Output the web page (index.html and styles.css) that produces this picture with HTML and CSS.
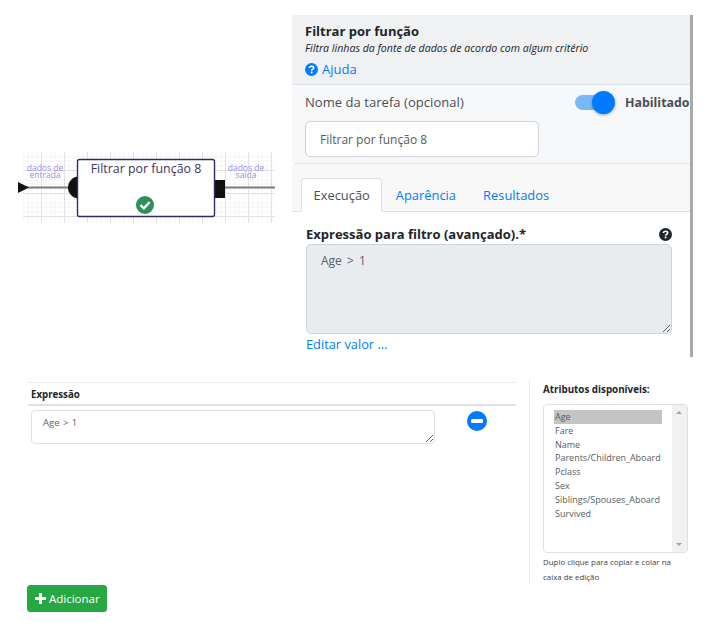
FILE: index.html
```html
<!DOCTYPE html>
<html lang="pt-BR">
<head>
    <meta charset="UTF-8">
    <title>Filtrar por função</title>
    <link rel="stylesheet" href="styles.css">
</head>
<body>
    <div class="top-row">
        <svg class="diagram" width="257" height="71" viewBox="0 0 257 71">
            <defs>
                <pattern id="grid" width="23" height="23" patternUnits="userSpaceOnUse">
                    <path d="M5 0V23M10 0V23M14 0V23M19 0V23" stroke="#f5f5f7" fill="none"/>
                    <path d="M0 5H23M0 9H23M0 14H23" stroke="#f5f5f7" fill="none"/>
                    <path d="M0.5 0V23M0 18.5H23" stroke="#e2e2e6" fill="none"/>
                </pattern>
            </defs>
            <rect x="5" y="0" width="252" height="71" fill="url(#grid)"/>
            <path d="M0 35.5H60M200 35.5H257" stroke="#7c7c7c" stroke-width="2"/>
            <path d="M0 30L11 35.5L0 41Z" fill="#111"/>
            <circle cx="61" cy="35.5" r="11" fill="#111"/>
            <rect x="196" y="28" width="11" height="18" fill="#111"/>
            <rect x="59.5" y="7.5" width="137" height="57" rx="2" fill="#fff" stroke="#2b2f66" stroke-width="1.4"/>
            <text class="port"><tspan x="27" y="18.5">dados de</tspan><tspan x="27" y="26">entrada</tspan></text>
            <text class="port"><tspan x="228" y="18.5">dados de</tspan><tspan x="228" y="26">saída</tspan></text>
            <text class="node-title" x="128" y="21">Filtrar por função 8</text>
            <circle cx="127" cy="53" r="9" fill="#2f8f5b"/>
            <path d="M122.5 53.2L125.8 56.3L131.6 50.2" fill="none" stroke="#fff" stroke-width="2.4"/>
        </svg>

        <div class="panel">
            <div class="panel-head">
                <div class="panel-title">Filtrar por função</div>
                <div class="panel-desc">Filtra linhas da fonte de dados de acordo com algum critério</div>
                <a class="help-link" href="#">
                    <svg class="help-icon" viewBox="0 0 16 16"><circle cx="8" cy="8" r="8" fill="#007bff"/><path d="M5.4 6.2C5.5 4.7 6.6 3.9 8.1 3.9C9.6 3.9 10.7 4.8 10.7 6C10.7 7.7 8.1 7.7 8.1 9.4" fill="none" stroke="#fff" stroke-width="1.9"/><rect x="7" y="10.6" width="2.2" height="2.1" fill="#fff"/></svg>
                    Ajuda
                </a>
            </div>
            <div class="task-box">
                <div class="task-row">
                    <span class="task-label">Nome da tarefa (opcional)</span>
                    <span class="toggle"><span class="toggle-thumb"></span></span>
                    <span class="toggle-label">Habilitado</span>
                </div>
                <input class="task-input" type="text" value="Filtrar por função 8">
            </div>
            <div class="card">
                <div class="tabs">
                    <a class="tab active" href="#">Execução</a>
                    <a class="tab" href="#">Aparência</a>
                    <a class="tab" href="#">Resultados</a>
                </div>
                <div class="card-body">
                    <div class="field-head">
                        <span class="field-label">Expressão para filtro (avançado).*</span>
                        <svg class="field-help" viewBox="0 0 16 16"><circle cx="8" cy="8" r="8" fill="#212529"/><path d="M5.4 6.2C5.5 4.7 6.6 3.9 8.1 3.9C9.6 3.9 10.7 4.8 10.7 6C10.7 7.7 8.1 7.7 8.1 9.4" fill="none" stroke="#fff" stroke-width="1.9"/><rect x="7" y="10.6" width="2.2" height="2.1" fill="#fff"/></svg>
                    </div>
                    <textarea class="expr-area" readonly>Age &gt; 1</textarea>
                    <a class="edit-link" href="#">Editar valor ...</a>
                </div>
            </div>
        </div>
    </div>

    <div class="bottom-row">
        <div class="expr-col">
            <div class="expr-head">Expressão</div>
            <div class="expr-row">
                <textarea class="expr-small" readonly>Age &gt; 1</textarea>
                <svg class="remove-icon" viewBox="0 0 20 20"><circle cx="10" cy="10" r="10" fill="#007bff"/><rect x="4" y="8" width="12" height="4" rx="1" fill="#fff"/></svg>
            </div>
        </div>
        <div class="attr-col">
            <div class="attr-title">Atributos disponíveis:</div>
            <div class="attr-box">
                <div class="attr-list">
                    <div class="attr-item selected">Age</div>
                    <div class="attr-item">Fare</div>
                    <div class="attr-item">Name</div>
                    <div class="attr-item">Parents/Children_Aboard</div>
                    <div class="attr-item">Pclass</div>
                    <div class="attr-item">Sex</div>
                    <div class="attr-item">Siblings/Spouses_Aboard</div>
                    <div class="attr-item">Survived</div>
                </div>
                <div class="attr-scroll">
                    <span class="arrow-up"></span>
                    <span class="arrow-down"></span>
                </div>
            </div>
            <div class="attr-hint">Duplo clique para copiar e colar na caixa de edição</div>
        </div>
    </div>

    <button class="add-btn"><span class="add-plus"></span>Adicionar</button>
</body>
</html>
```

FILE: styles.css
```css
* {
    box-sizing: border-box;
}
html, body {
    height: 623px;
    overflow: hidden;
}
body {
    margin: 0;
    background: #fff;
    color: #212529;
    font-family: "Open Sans", Arial, sans-serif;
}
a {
    color: #007bff;
    text-decoration: none;
}

/* top part */
.top-row {
    display: flex;
    align-items: flex-start;
    height: 380px;
    padding: 15px 0 0 18px;
}
.diagram {
    display: block;
    flex: none;
    margin-top: 137px;
}
.port {
    font-size: 8.5px;
    fill: #9a8fe6;
    text-anchor: middle;
}
.node-title {
    font-size: 12.4px;
    fill: #3a3560;
    text-anchor: middle;
}
.panel {
    flex: none;
    width: 401px;
    height: 342px;
    margin-left: 17px;
    border-right: 3px solid #a9a9a9;
    overflow: hidden;
}
.panel-head {
    height: 70px;
    padding: 8px 13px 0;
    background: #f0f1f3;
    border-bottom: 1px solid #dee2e6;
}
.panel-title {
    font-size: 13px;
    font-weight: 700;
    line-height: 17px;
}
.panel-desc {
    font-size: 10.6px;
    font-style: italic;
    line-height: 17px;
}
.help-link {
    display: flex;
    align-items: center;
    gap: 4px;
    margin-top: 3px;
    font-size: 13px;
    line-height: 18px;
}
.help-icon {
    width: 13px;
    height: 13px;
}
.task-box {
    height: 78px;
    padding: 5px 0 0 13px;
    background: #f7f8fa;
}
.task-row {
    display: flex;
    align-items: center;
    height: 24px;
    font-size: 13px;
    color: #4a4f55;
}
.task-label {
    width: 270px;
    letter-spacing: .05px;
}
.toggle {
    position: relative;
    width: 32px;
    height: 15px;
    border-radius: 8px;
    background: #7ab8f5;
}
.toggle-thumb {
    position: absolute;
    top: -4px;
    right: -8px;
    width: 23px;
    height: 23px;
    border-radius: 50%;
    background: #007bff;
    box-shadow: 0 1px 3px rgba(0, 0, 0, .35);
}
.toggle-label {
    margin-left: 18px;
    font-size: 12.4px;
    font-weight: 700;
    white-space: nowrap;
}
.task-input {
    display: block;
    width: 234px;
    height: 36px;
    margin-top: 7px;
    padding: 0 14px;
    border: 1px solid #ced4da;
    border-radius: 5px;
    background: #fff;
    color: #555b61;
    font: 12px "Open Sans", Arial, sans-serif;
}
.card {
    background: #fff;
    border-top: 1px solid #e3e4e6;
    border-radius: 4px 0 0 0;
}
.tabs {
    display: flex;
    height: 48px;
    padding: 14px 0 0 9px;
    background: #f8f8f8;
    border-bottom: 1px solid #dee2e6;
}
.tab {
    height: 34px;
    padding: 0 12.5px;
    border: 1px solid transparent;
    font-size: 12.9px;
    line-height: 33px;
}
.tab.active {
    padding: 0 11.5px;
    background: #fff;
    border-color: #dee2e6 #dee2e6 #fff;
    border-radius: 4px 4px 0 0;
    color: #495057;
}
.card-body {
    padding: 13px 18px 0 14px;
}
.field-head {
    display: flex;
    justify-content: space-between;
    align-items: center;
    height: 18px;
}
.field-label {
    font-size: 13px;
    font-weight: 700;
}
.field-help {
    width: 13px;
    height: 13px;
}
.expr-area {
    display: block;
    width: 366px;
    height: 90px;
    margin-top: 1px;
    padding: 7px 14px;
    border: 1px solid #ced4da;
    border-radius: 5px;
    background: #e9ecef;
    color: #5a6066;
    font: 12px "Open Sans", Arial, sans-serif;
    word-spacing: 2px;
    outline: none;
}
.edit-link {
    display: block;
    margin-top: 2px;
    font-size: 12.8px;
    line-height: 16px;
}

/* bottom part */
.bottom-row {
    display: flex;
    height: 205px;
}
.expr-col {
    width: 488px;
    height: 100px;
    margin: 2px 0 0 28px;
    border-top: 1px solid #e9ecef;
}
.expr-head {
    height: 23px;
    padding-left: 3px;
    border-bottom: 2px solid #dee2e6;
    font-size: 9.7px;
    font-weight: 700;
    line-height: 23px;
}
.expr-row {
    display: flex;
    align-items: flex-start;
    padding: 4px 0 0 3px;
}
.expr-small {
    display: block;
    width: 404px;
    height: 34px;
    padding: 5px 11px;
    border: 1px solid #dde1e5;
    border-radius: 4px;
    background: #fff;
    color: #5a6066;
    font: 9.5px "Open Sans", Arial, sans-serif;
    word-spacing: 1px;
    outline: none;
}
.remove-icon {
    width: 20px;
    height: 20px;
    margin-left: 32px;
    margin-top: 1px;
}
.attr-col {
    width: 165px;
    height: 205px;
    margin-left: 13px;
    padding-left: 13px;
    border-left: 1px solid #e9ecef;
}
.attr-title {
    height: 24px;
    font-size: 9.8px;
    font-weight: 700;
    line-height: 20px;
}
.attr-box {
    display: flex;
    width: 145px;
    height: 149px;
    border: 1px solid #dde1e5;
    border-radius: 4px;
    overflow: hidden;
}
.attr-list {
    flex: 1;
    padding: 5px 0 0 10px;
}
.attr-item {
    width: 108px;
    height: 13.8px;
    padding-left: 1px;
    color: #555b61;
    font-size: 9px;
    line-height: 13.8px;
    white-space: nowrap;
}
.attr-item.selected {
    background: #c4c4c4;
}
.attr-scroll {
    position: relative;
    width: 15px;
    background: #f1f1f1;
}
.arrow-up, .arrow-down {
    position: absolute;
    left: 4px;
    border-left: 3.5px solid transparent;
    border-right: 3.5px solid transparent;
}
.arrow-up {
    top: 6px;
    border-bottom: 3.5px solid #a3a3a3;
}
.arrow-down {
    bottom: 6px;
    border-top: 3.5px solid #a3a3a3;
}
.attr-hint {
    width: 140px;
    margin-top: 2px;
    color: #444;
    font-size: 7.9px;
    line-height: 15px;
}
.add-btn {
    display: flex;
    align-items: center;
    gap: 3px;
    width: 80px;
    height: 27px;
    margin-left: 27px;
    padding: 0 0 0 7px;
    border: 1px solid #28a745;
    border-radius: 3px;
    background: #28a745;
    color: #fff;
    font: 11.5px "Open Sans", Arial, sans-serif;
}
.add-plus {
    position: relative;
    width: 11px;
    height: 11px;
    background: linear-gradient(#fff, #fff) center / 11px 3px no-repeat,
                linear-gradient(#fff, #fff) center / 3px 11px no-repeat;
}
```
